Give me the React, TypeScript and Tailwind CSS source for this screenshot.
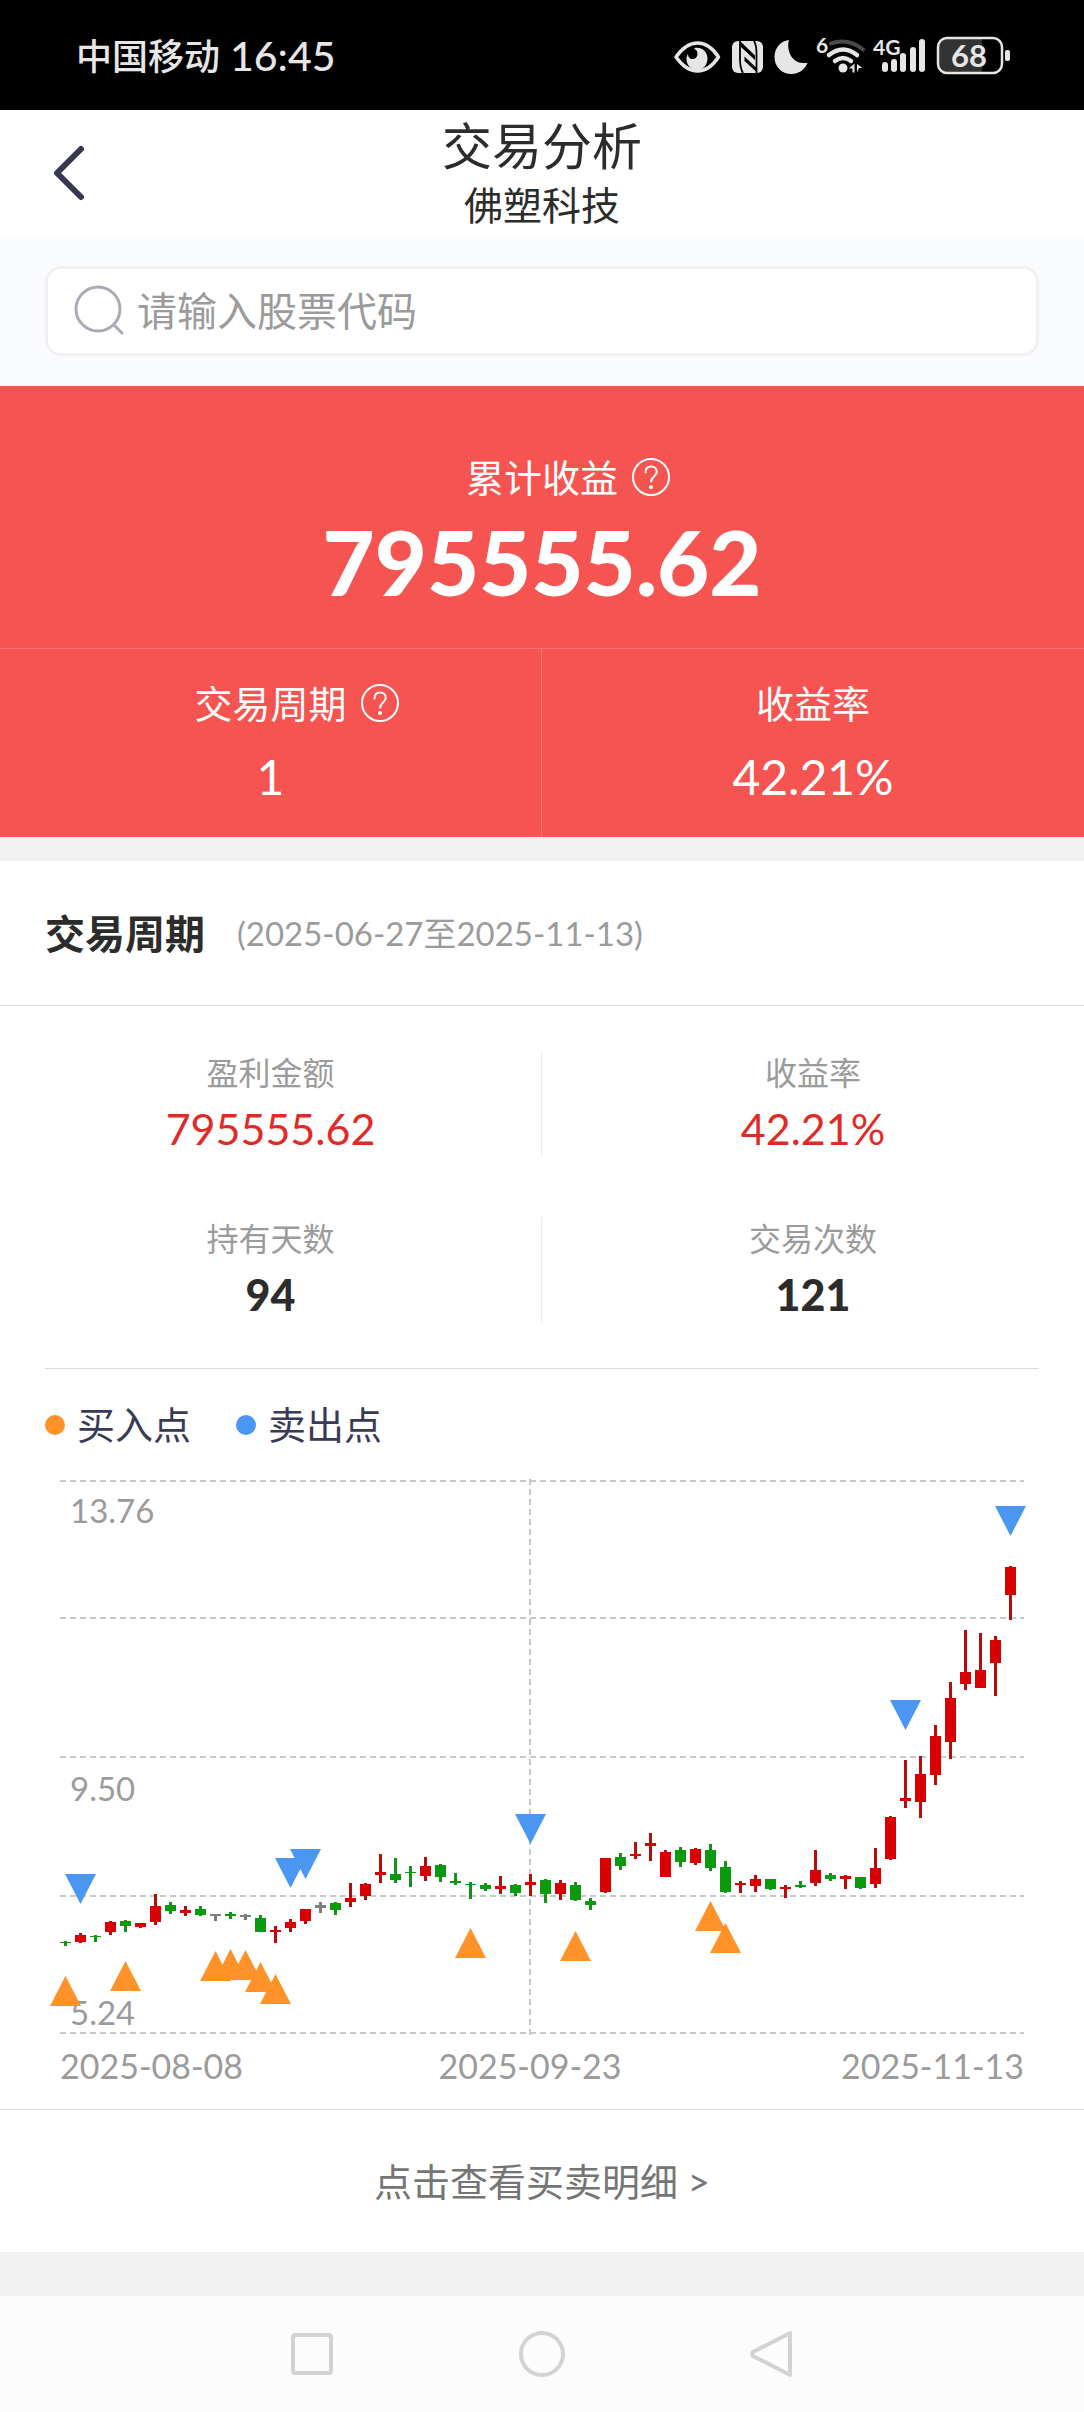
import type { ReactNode } from "react";

type Tone = "up" | "down" | "flat";
type Candle = [tone: Tone, high: number, bodyTop: number, bodyBottom: number, low: number];

const CANDLES: Candle[] = [
  ["down", 481, 482, 483, 486],
  ["up", 473, 475, 482, 483],
  ["down", 475, 476, 477, 482],
  ["up", 461, 462, 472, 475],
  ["down", 460, 461, 466, 472],
  ["up", 463, 463, 467, 468],
  ["up", 434, 446, 462, 465],
  ["down", 442, 445, 451, 454],
  ["up", 446, 450, 453, 456],
  ["down", 446, 449, 455, 456],
  ["flat", 454, 454, 456, 461],
  ["down", 452, 454, 456, 459],
  ["flat", 454, 455, 457, 460],
  ["down", 455, 458, 472, 472],
  ["up", 466, 470, 472, 483],
  ["up", 459, 462, 468, 472],
  ["up", 449, 449, 461, 464],
  ["flat", 442, 445, 448, 453],
  ["down", 442, 443, 450, 455],
  ["up", 423, 438, 442, 447],
  ["up", 423, 424, 436, 440],
  ["up", 394, 412, 415, 423],
  ["down", 398, 414, 420, 423],
  ["down", 406, 412, 413, 427],
  ["up", 397, 406, 416, 421],
  ["down", 404, 405, 417, 422],
  ["down", 413, 421, 423, 425],
  ["down", 422, 424, 425, 439],
  ["down", 423, 425, 429, 431],
  ["up", 416, 426, 429, 434],
  ["down", 424, 425, 433, 436],
  ["up", 414, 422, 425, 436],
  ["down", 419, 420, 434, 443],
  ["up", 420, 423, 434, 440],
  ["down", 422, 425, 440, 441],
  ["down", 438, 441, 445, 450],
  ["up", 398, 398, 432, 433],
  ["down", 393, 397, 406, 410],
  ["up", 382, 394, 396, 399],
  ["up", 373, 383, 386, 401],
  ["up", 390, 392, 417, 417],
  ["down", 387, 390, 402, 407],
  ["up", 388, 389, 403, 405],
  ["down", 384, 390, 408, 411],
  ["down", 401, 407, 432, 433],
  ["up", 421, 423, 425, 433],
  ["up", 415, 419, 426, 432],
  ["down", 419, 419, 429, 430],
  ["up", 425, 427, 429, 438],
  ["down", 421, 425, 427, 428],
  ["up", 390, 410, 423, 426],
  ["down", 413, 415, 419, 421],
  ["up", 415, 416, 419, 429],
  ["down", 417, 417, 428, 429],
  ["up", 388, 408, 424, 428],
  ["up", 356, 357, 399, 400],
  ["up", 300, 338, 341, 348],
  ["up", 296, 314, 342, 358],
  ["up", 265, 276, 315, 325],
  ["up", 222, 238, 282, 299],
  ["up", 170, 212, 224, 230],
  ["up", 173, 210, 228, 228],
  ["up", 176, 180, 203, 236],
  ["up", 106, 107, 135, 160],
];

const SELLS: [index: number, top: number][] = [
  [1, 414], [15, 398], [16, 389], [31, 354], [56, 240], [63, 46],
];

const BUYS: [index: number, apex: number][] = [
  [0, 516], [4, 501], [10, 491], [11, 489], [12, 490], [13, 502], [14, 514], [27, 468], [34, 471], [43, 441], [44, 463],
];

const BODY_FILL: Record<Tone, string> = { up: "#d80000", down: "#0a9a0e", flat: "#808080" };
const WICK_FILL: Record<Tone, string> = { up: "#b80c0c", down: "#178f1b", flat: "#7a7a7a" };
const GRID_ROWS = [21, 158, 297, 436, 573];

const left = (index: number) => 60 + index * 15;

function CandleChart() {
  return (
    <svg viewBox="0 0 1084 576" className="block w-full" role="img" aria-label="买卖点K线图">
      <g stroke="#c8c8cb" strokeWidth="2" strokeDasharray="6 4">
        {GRID_ROWS.map((y) => (
          <line key={y} x1="60" x2="1024" y1={y} y2={y} />
        ))}
        <line x1="530" x2="530" y1="19" y2="575" />
      </g>
      <g fill="#9b9b9b" fontSize="33">
        <text x="70" y="63">13.76</text>
        <text x="70" y="341">9.50</text>
        <text x="70" y="565">5.24</text>
      </g>
      {CANDLES.map(([tone, high, top, bottom, low], i) => (
        <g key={i}>
          <rect x={left(i) + 4} y={high} width="3" height={low - high} fill={WICK_FILL[tone]} />
          <rect x={left(i)} y={top} width="11" height={bottom - top} fill={BODY_FILL[tone]} />
        </g>
      ))}
      <g fill="#4b96f3">
        {SELLS.map(([i, y]) => (
          <path key={i} d={`M${left(i) - 10} ${y}h31l-15.500 30z`} />
        ))}
      </g>
      <g fill="#ff9229">
        {BUYS.map(([i, y]) => (
          <path key={i} d={`M${left(i) - 10} ${y + 30}h31l-15.500-30z`} />
        ))}
      </g>
    </svg>
  );
}

function StatusIcons() {
  return (
    <svg width="338" height="60" viewBox="673 26 338 60" fill="#e6e6e6" role="img" aria-label="状态图标 68%">
      <path d="M676 57C683 47 690 43 697.500 43S712 47 718.500 57C712 67 705 71 697.500 71S683 67 676 57Z" fill="none" stroke="#e6e6e6" strokeWidth="3.500" strokeLinejoin="round" />
      <path d="M695 48c7-1 12.500 4 12.500 10.500S703 70 697 70s-10.500-5-10.500-11c0-2 .5-3.500 1.500-5 0 3 2 5 4.500 5s5-2 5-5-1.500-4.500-3.500-5z" />
      <rect x="732" y="41" width="31" height="32" rx="6" />
      <path d="M740 41v18q0 9 3 14M754 41q2.500 4 2.500 13v19" stroke="#000" strokeWidth="1.800" fill="none" />
      <path d="M740.500 41.500l14.500 14v4.500L741 47ZM744.500 56.500l12 11.500v4L744.500 61Z" fill="#000" />
      <path d="M789 40c-3 10 3 23 14 23h4.500c-3 7-9 11-16 11-10 0-17-7.500-17-17 0-9 6-16 14.500-17Z" />
      <g fill="none" strokeLinecap="round">
        <path d="M831 43.500q17-6 32 6" stroke="#4a4a4a" strokeWidth="4" />
        <path d="M829 55q14-11 28 0" stroke="#e6e6e6" strokeWidth="4.500" />
        <path d="M835 61q8-6 16 0" stroke="#e6e6e6" strokeWidth="4.500" />
      </g>
      <circle cx="843" cy="68" r="4.500" />
      <path d="M849 68.500l5.500-5v9h-2v-4zM857 64l5.500 4-3.500 0-2 4.500z" />
      <rect x="882" y="62" width="6" height="10" rx="3" />
      <rect x="891" y="59" width="6" height="13" rx="3" />
      <rect x="900" y="53" width="6" height="19" rx="3" />
      <rect x="910" y="47" width="6" height="25" rx="3" />
      <rect x="919" y="39" width="6" height="33" rx="3" />
      <path d="M947 39h35v34h-35a8 8 0 0 1-8-8V47a8 8 0 0 1 8-8Z" fill="#333" />
      <rect x="938" y="38" width="64" height="35" rx="9" fill="none" stroke="#e6e6e6" strokeWidth="2.500" />
      <rect x="1005" y="50" width="5" height="11" rx="2" />
      <g fontWeight="700">
        <text x="816" y="53" fontSize="21">6</text>
        <text x="873" y="55" fontSize="21">4G</text>
        <text x="969" y="67" fontSize="31" textAnchor="middle">68</text>
      </g>
    </svg>
  );
}

function HelpButton({ label }: { label: string }) {
  return (
    <button type="button" aria-label={label} className="size-[38px]">
      <svg viewBox="0 0 38 38" fill="none" stroke="currentColor" strokeWidth="2" strokeLinecap="round">
        <circle cx="19" cy="19" r="18" />
        <path d="M13.500 14.500c0-4 2.500-6 5.700-6s5.600 2.200 5.600 5.300c0 4.500-5.600 5-5.600 9.700" />
        <circle cx="19" cy="29" r="1" fill="currentColor" />
      </svg>
    </button>
  );
}

function MetricLabel({ text, help }: { text: string; help?: boolean }) {
  return (
    <div className={help ? "flex h-11 items-center gap-3.5 pl-[52px] text-[38px]" : "flex h-11 items-center text-[38px]"}>
      <span>{text}</span>
      {help && <HelpButton label={`${text}说明`} />}
    </div>
  );
}

function SummaryCell({ value, children }: { value: string; children: ReactNode }) {
  return (
    <div className="flex flex-col items-center pt-8 pb-7">
      {children}
      <div className="mt-5 text-[48px] leading-[64px]">{value}</div>
    </div>
  );
}

function Stat({ label, value, strong }: { label: string; value: string; strong?: boolean }) {
  return (
    <div className="flex h-[106px] flex-col items-center gap-2 border-[#ececec] odd:border-r">
      <dt className="text-[32px] leading-[44px] text-[#9b9b9b]">{label}</dt>
      <dd className={strong ? "text-[43px] leading-[52px] font-black text-[#2c2c2c]" : "text-[43px] leading-[52px] text-[#e12a26]"}>{value}</dd>
    </div>
  );
}

function Legend({ dot, label }: { dot: string; label: string }) {
  return (
    <div className="flex items-center gap-3">
      <span className={`size-5 rounded-full ${dot}`} />
      <span>{label}</span>
    </div>
  );
}

export default function App() {
  return (
    <div className="flex min-h-screen flex-col bg-[#f1f1f1] font-['Lato','Noto_Sans_CJK_SC',sans-serif] text-[#2c2c2c]">
      <div className="flex h-[110px] items-center justify-between bg-black pt-0.5 pr-[73px] pl-[76px] text-[#e6e6e6]">
        <div className="flex items-center gap-2.5">
          <span className="text-[36px] font-medium">中国移动</span>
          <span className="text-[41px] font-medium">16:45</span>
        </div>
        <StatusIcons />
      </div>

      <header className="grid h-[126px] grid-cols-[1fr_auto_1fr] items-center bg-white pl-[50px]">
        <button type="button" aria-label="返回" className="w-10">
          <svg viewBox="0 0 40 60" fill="none" stroke="#373850" strokeWidth="6" strokeLinecap="round" strokeLinejoin="round">
            <path d="M31 6 7 30l24 24" />
          </svg>
        </button>
        <div className="flex flex-col items-center pt-0.5 pr-[50px]">
          <h1 className="text-[50px] leading-[62px]">交易分析</h1>
          <p className="text-[39px] leading-[56px]">佛塑科技</p>
        </div>
      </header>

      <div className="bg-[#fafbfd] px-[45px] py-[30px]">
        <label className="flex h-[90px] items-center gap-[11px] rounded-2xl border-3 border-[#f1f1f3] bg-white px-[26px]">
          <svg width="52" height="52" viewBox="0 0 52 52" fill="none" stroke="#a9abb5" strokeWidth="3" strokeLinecap="round">
            <circle cx="24" cy="24" r="22" />
            <path d="m40 40 8 8" />
          </svg>
          <input
            type="text"
            aria-label="股票代码"
            placeholder="请输入股票代码"
            className="min-w-0 flex-1 bg-transparent text-[40px] outline-none placeholder:text-[#9b9b9b]"
          />
        </label>
      </div>

      <section className="bg-[#f65451] text-white">
        <div className="flex flex-col items-center pt-[69px] pb-[39px]">
          <MetricLabel text="累计收益" help />
          <div className="mt-3.5 text-[90px] leading-[96px] font-black">795555.62</div>
        </div>
        <div className="grid grid-cols-2 divide-x divide-white/20 border-t border-white/20">
          <SummaryCell value="1">
            <MetricLabel text="交易周期" help />
          </SummaryCell>
          <SummaryCell value="42.21%">
            <MetricLabel text="收益率" />
          </SummaryCell>
        </div>
      </section>

      <section className="mt-6 bg-white">
        <div className="flex h-[145px] items-center gap-8 border-b border-[#dadada] px-[45px] pt-0.5">
          <h2 className="text-[40px] font-bold">交易周期</h2>
          <span className="text-[33px] text-[#9b9b9b]">(2025-06-27至2025-11-13)</span>
        </div>

        <dl className="grid grid-cols-2 gap-y-[60px] py-[45px]">
          <Stat label="盈利金额" value="795555.62" />
          <Stat label="收益率" value="42.21%" />
          <Stat label="持有天数" value="94" strong />
          <Stat label="交易次数" value="121" strong />
        </dl>

        <div className="mx-[45px] flex h-[92px] items-center gap-[45px] border-t border-[#dadada] pt-5 text-[38px] text-[#393a55]">
          <Legend dot="bg-[#ff9229]" label="买入点" />
          <Legend dot="bg-[#4b96f3]" label="卖出点" />
        </div>

        <CandleChart />
        <div className="grid grid-cols-[1fr_auto_1fr] px-[60px] pt-2 pb-[21px] text-[34px] leading-[44px] text-[#9b9b9b]">
          <span>2025-08-08</span>
          <span className="pr-6">2025-09-23</span>
          <span className="text-right">2025-11-13</span>
        </div>

        <a href="#details" className="flex h-[143px] items-center justify-center border-t border-[#dadada] text-[38px] text-[#757575]">
          点击查看买卖明细 &gt;
        </a>
      </section>

      <nav className="mt-auto flex h-[116px] items-center justify-center gap-[180px] bg-[#fcfcfc] text-[#d3d3d3]">
        <button type="button" aria-label="最近任务" className="size-[50px]">
          <svg viewBox="0 0 50 50" fill="none" stroke="currentColor" strokeWidth="4">
            <rect x="6" y="6" width="38" height="38" rx="2" />
          </svg>
        </button>
        <button type="button" aria-label="主屏幕" className="size-[50px]">
          <svg viewBox="0 0 50 50" fill="none" stroke="currentColor" strokeWidth="4">
            <circle cx="25" cy="25" r="21" />
          </svg>
        </button>
        <button type="button" aria-label="返回上一页" className="size-[50px]">
          <svg viewBox="0 0 50 50" fill="none" stroke="currentColor" strokeWidth="4" strokeLinejoin="round">
            <path d="M43 4v42L6 27q-2-2 0-4z" />
          </svg>
        </button>
      </nav>
    </div>
  );
}
